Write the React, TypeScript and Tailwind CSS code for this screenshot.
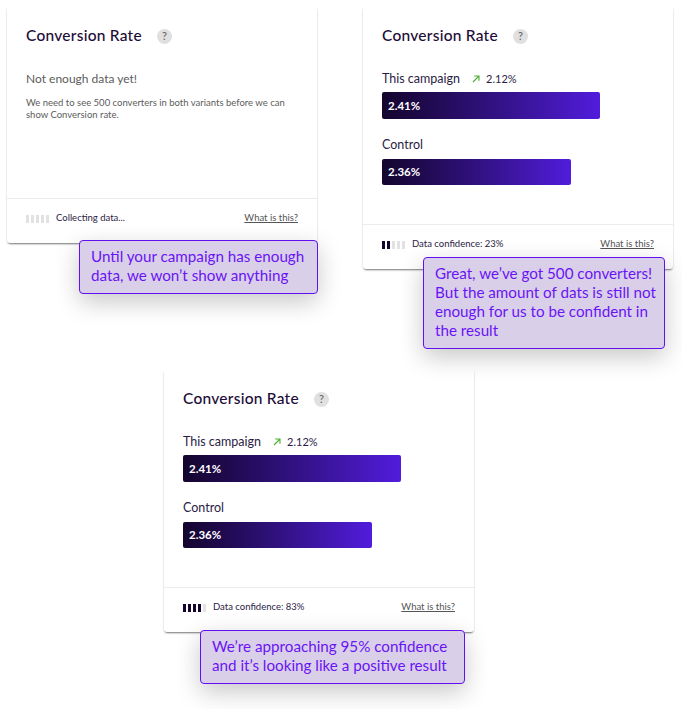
import React from 'react';

const font = { fontFamily: '"Lato", "Noto Sans", sans-serif' };

const ConfidenceBars = ({ filled }: { filled: number }) => (
  <div className="flex gap-[2px] w-[22px]">
    {[0, 1, 2, 3, 4].map(i => (
      <div key={i} className={`h-[8px] w-[3px] shrink-0 ${i < filled ? 'bg-[#150630]' : 'bg-[#e2e2e2]'}`} />
    ))}
  </div>
);

const Bar = ({ value, width, height }: { value: string; width: string; height: string }) => (
  <div className={`${width} ${height} rounded-[2px] bg-gradient-to-r from-[#14052e] to-[#511cdd] flex items-center pl-[6px] text-white text-[11.5px] font-bold`}>
    {value}
  </div>
);

const Card = ({ children, status, filled }: { children: React.ReactNode; status: string; filled: number }) => (
  <div className="w-[310px] bg-white rounded-b-[3px] shadow-[0_2px_2px_-1px_rgba(0,0,0,0.5),0_0_2px_rgba(0,0,0,0.18)] [clip-path:inset(0_-10px_-10px_-10px)]">
    <div className="px-[19px] pt-[19px]">
      <div className="flex items-center h-[18px]">
        <h2 className="text-[15.5px] font-medium text-[#1d0c38] tracking-[0.25px]">Conversion Rate</h2>
        <span className="ml-[15px] w-[15px] h-[15px] rounded-full bg-[#e0e0e0] text-[#666] text-[11px] font-medium flex items-center justify-center">?</span>
      </div>
      {children}
    </div>
    <div className="border-t border-[#ececec] h-[45px] px-[19px] pb-[5px] flex items-center">
      <ConfidenceBars filled={filled} />
      <span className="ml-[8px] text-[9.5px] text-[#2c1c45]">{status}</span>
      <a className="ml-auto text-[9.5px] text-[#555] underline">What is this?</a>
    </div>
  </div>
);

const Results = () => (
  <div className="h-[179px] pt-[26px]">
    <div className="flex items-center h-[16px] text-[12.5px] text-[#2c1c45]">
      <span>This campaign</span>
      <svg className="ml-[12px] mr-[6px]" width="8" height="8" viewBox="0 0 8 8" fill="none" stroke="#4caf2e" strokeWidth="1.1">
        <path d="M1 7L7 1M2.2 1H7V5.8" />
      </svg>
      <span className="text-[11px]">2.12%</span>
    </div>
    <div className="mt-[5px]"><Bar value="2.41%" width="w-[218px]" height="h-[27px]" /></div>
    <div className="mt-[18px] h-[16px] flex items-center text-[12.5px] text-[#2c1c45]">Control</div>
    <div className="mt-[6px]"><Bar value="2.36%" width="w-[189px]" height="h-[26px]" /></div>
  </div>
);

const Note = ({ children, className }: { children: React.ReactNode; className: string }) => (
  <div className={`absolute ${className} bg-[#d9cfe9] border border-[#6210f2] rounded-[4px] text-[#6a14f5] text-[15.2px] leading-[19px] pl-[11px] pt-[6px] shadow-[0_8px_24px_rgba(0,0,0,0.22)]`}>
    {children}
  </div>
);

export default function App() {
  return (
    <div style={font} className="relative w-[682px] h-[709px] overflow-hidden bg-white">
      <div className="flex items-start pl-[7px] pt-[8px] gap-[46px]">
        <Card status="Collecting data..." filled={0}>
          <div className="h-[153px] pt-[26px]">
            <p className="text-[12px] leading-[16px] text-[#5c5c5c]">Not enough data yet!</p>
            <p className="mt-[10px] text-[9.5px] leading-[12px] text-[#5c5c5c]">
              We need to see 500 converters in both variants before we can<br />show Conversion rate.
            </p>
          </div>
        </Card>
        <Card status="Data confidence: 23%" filled={2}>
          <Results />
        </Card>
      </div>
      <div className="ml-[164px] mt-[102px] w-fit">
        <Card status="Data confidence: 83%" filled={4}>
          <Results />
        </Card>
      </div>

      <Note className="left-[79px] top-[240px] w-[239px] h-[54px]">
        Until your campaign has enough<br />data, we won’t show anything
      </Note>
      <Note className="left-[423px] top-[257px] w-[242px] h-[92px]">
        Great, we’ve got 500 converters!<br />But the amount of dats is still not<br />enough for us to be confident in<br />the result
      </Note>
      <Note className="left-[200px] top-[630px] w-[265px] h-[54px]">
        We’re approaching 95% confidence<br />and it’s looking like a positive result
      </Note>
    </div>
  );
}
